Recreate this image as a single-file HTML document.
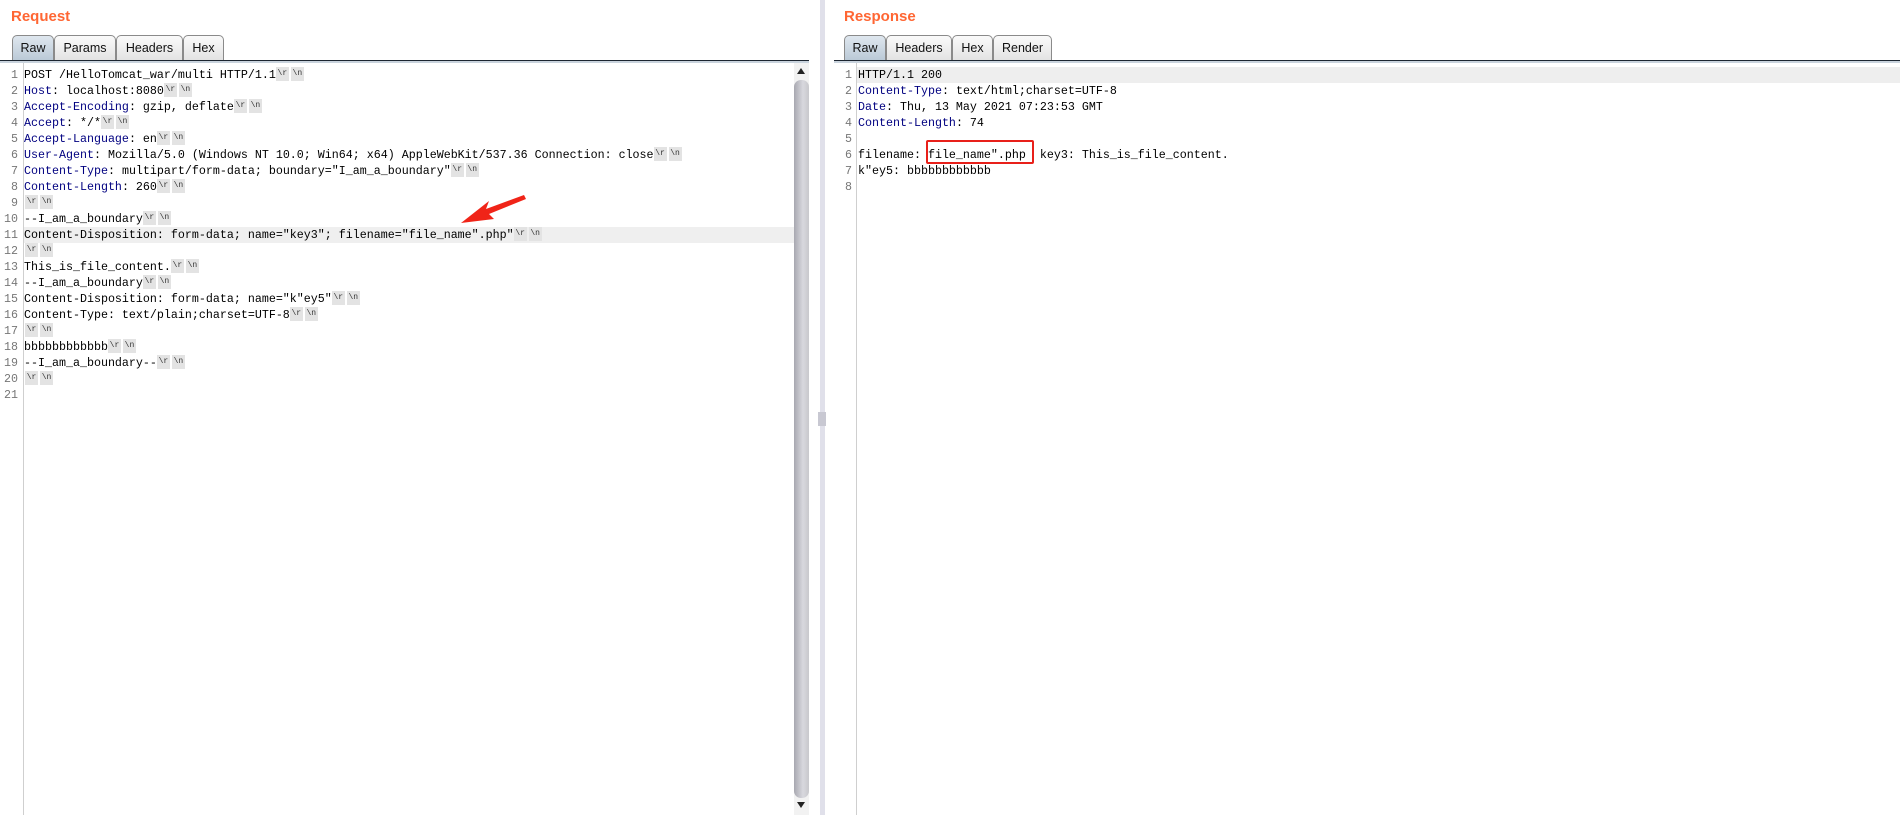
<!DOCTYPE html>
<html><head><meta charset="utf-8"><style>
*{margin:0;padding:0;box-sizing:border-box}
body{width:1900px;height:815px;background:#fff;position:relative;overflow:hidden;font-family:"Liberation Sans",Arial,sans-serif}
.title{position:absolute;top:8px;color:#ff6633;font-weight:bold;font-size:15px}
.tab{position:absolute;top:35px;height:26px;border:1px solid #8a8a8a;border-bottom:none;border-radius:5px 5px 0 0;background:linear-gradient(#fafafa,#e2e2e2);font-size:12.5px;color:#111;text-align:center;line-height:24px}
.tab.sel{background:linear-gradient(#dfe7ef,#b9c8d6)}
.bar{position:absolute;top:60px;height:3px;border-top:1px solid #1c2530;border-bottom:2px solid #c9d3dd}
.ed{position:absolute;top:67px;font-family:"Liberation Mono",monospace;font-size:11.667px;line-height:16px;color:#000}
.ln{height:16px;white-space:pre;position:relative}
.num{position:absolute;text-align:right;color:#777}
.k{color:#000080}
.t{display:inline-block;width:13px;height:14px;background:#e3e3e3;margin-right:2px;font-size:8px;line-height:14px;text-align:center;vertical-align:middle;position:relative;top:-1px;color:#333;letter-spacing:0}
.gut{position:absolute;top:63px;bottom:0;width:1px;background:#cfcfcf}
</style></head><body>
<div class="title" style="left:11px">Request</div>
<div class="title" style="left:844px">Response</div>

<div class="tab sel" style="left:12px;width:42px">Raw</div>
<div class="tab" style="left:54px;width:62px">Params</div>
<div class="tab" style="left:116px;width:67px">Headers</div>
<div class="tab" style="left:183px;width:41px">Hex</div>
<div class="bar" style="left:0;width:809px"></div>

<div class="tab sel" style="left:844px;width:42px">Raw</div>
<div class="tab" style="left:886px;width:66px">Headers</div>
<div class="tab" style="left:952px;width:41px">Hex</div>
<div class="tab" style="left:993px;width:59px">Render</div>
<div class="bar" style="left:834px;width:1066px"></div>

<div class="gut" style="left:23px"></div>
<div class="gut" style="left:856px"></div>

<div style="position:absolute;left:820px;top:0;width:5px;height:815px;background:#e0e0ea"></div>
<div style="position:absolute;left:818px;top:412px;width:8px;height:14px;background:#c8c8d2"></div>

<div style="position:absolute;left:794px;top:63px;width:15px;height:752px;background:#f2f2f2"></div>
<div style="position:absolute;left:797px;top:68px;width:0;height:0;border-left:4px solid transparent;border-right:4px solid transparent;border-bottom:6px solid #222"></div>
<div style="position:absolute;left:794px;top:80px;width:15px;height:718px;border-radius:7px;background:linear-gradient(90deg,#a8a8b0,#d8d8de 60%,#c8c8cc)"></div>
<div style="position:absolute;left:797px;top:802px;width:0;height:0;border-left:4px solid transparent;border-right:4px solid transparent;border-top:6px solid #222"></div>

<div style="position:absolute;left:24px;top:227px;width:770px;height:16px;background:#efefef"></div>
<div style="position:absolute;left:857px;top:67px;width:1043px;height:16px;background:#eeeeee"></div>

<div class="ed" style="left:0;width:794px">
<div class="ln"><span class="num" style="left:0;width:18px">1</span><span style="position:absolute;left:24px">POST /HelloTomcat_war/multi HTTP/1.1<span class="t">\r</span><span class="t">\n</span></span></div>
<div class="ln"><span class="num" style="left:0;width:18px">2</span><span style="position:absolute;left:24px"><span class="k">Host</span>: localhost:8080<span class="t">\r</span><span class="t">\n</span></span></div>
<div class="ln"><span class="num" style="left:0;width:18px">3</span><span style="position:absolute;left:24px"><span class="k">Accept-Encoding</span>: gzip, deflate<span class="t">\r</span><span class="t">\n</span></span></div>
<div class="ln"><span class="num" style="left:0;width:18px">4</span><span style="position:absolute;left:24px"><span class="k">Accept</span>: */*<span class="t">\r</span><span class="t">\n</span></span></div>
<div class="ln"><span class="num" style="left:0;width:18px">5</span><span style="position:absolute;left:24px"><span class="k">Accept-Language</span>: en<span class="t">\r</span><span class="t">\n</span></span></div>
<div class="ln"><span class="num" style="left:0;width:18px">6</span><span style="position:absolute;left:24px"><span class="k">User-Agent</span>: Mozilla/5.0 (Windows NT 10.0; Win64; x64) AppleWebKit/537.36 Connection: close<span class="t">\r</span><span class="t">\n</span></span></div>
<div class="ln"><span class="num" style="left:0;width:18px">7</span><span style="position:absolute;left:24px"><span class="k">Content-Type</span>: multipart/form-data; boundary="I_am_a_boundary"<span class="t">\r</span><span class="t">\n</span></span></div>
<div class="ln"><span class="num" style="left:0;width:18px">8</span><span style="position:absolute;left:24px"><span class="k">Content-Length</span>: 260<span class="t">\r</span><span class="t">\n</span></span></div>
<div class="ln"><span class="num" style="left:0;width:18px">9</span><span style="position:absolute;left:25px"><span class="t">\r</span><span class="t">\n</span></span></div>
<div class="ln"><span class="num" style="left:0;width:18px">10</span><span style="position:absolute;left:24px">--I_am_a_boundary<span class="t">\r</span><span class="t">\n</span></span></div>
<div class="ln"><span class="num" style="left:0;width:18px">11</span><span style="position:absolute;left:24px">Content-Disposition: form-data; name="key3"; filename="file_name".php"<span class="t">\r</span><span class="t">\n</span></span></div>
<div class="ln"><span class="num" style="left:0;width:18px">12</span><span style="position:absolute;left:25px"><span class="t">\r</span><span class="t">\n</span></span></div>
<div class="ln"><span class="num" style="left:0;width:18px">13</span><span style="position:absolute;left:24px">This_is_file_content.<span class="t">\r</span><span class="t">\n</span></span></div>
<div class="ln"><span class="num" style="left:0;width:18px">14</span><span style="position:absolute;left:24px">--I_am_a_boundary<span class="t">\r</span><span class="t">\n</span></span></div>
<div class="ln"><span class="num" style="left:0;width:18px">15</span><span style="position:absolute;left:24px">Content-Disposition: form-data; name="k"ey5"<span class="t">\r</span><span class="t">\n</span></span></div>
<div class="ln"><span class="num" style="left:0;width:18px">16</span><span style="position:absolute;left:24px">Content-Type: text/plain;charset=UTF-8<span class="t">\r</span><span class="t">\n</span></span></div>
<div class="ln"><span class="num" style="left:0;width:18px">17</span><span style="position:absolute;left:25px"><span class="t">\r</span><span class="t">\n</span></span></div>
<div class="ln"><span class="num" style="left:0;width:18px">18</span><span style="position:absolute;left:24px">bbbbbbbbbbbb<span class="t">\r</span><span class="t">\n</span></span></div>
<div class="ln"><span class="num" style="left:0;width:18px">19</span><span style="position:absolute;left:24px">--I_am_a_boundary--<span class="t">\r</span><span class="t">\n</span></span></div>
<div class="ln"><span class="num" style="left:0;width:18px">20</span><span style="position:absolute;left:25px"><span class="t">\r</span><span class="t">\n</span></span></div>
<div class="ln"><span class="num" style="left:0;width:18px">21</span></div>
</div>

<div class="ed" style="left:834px;width:1066px">
<div class="ln"><span class="num" style="left:0;width:18px">1</span><span style="position:absolute;left:24px">HTTP/1.1 200</span></div>
<div class="ln"><span class="num" style="left:0;width:18px">2</span><span style="position:absolute;left:24px"><span class="k">Content-Type</span>: text/html;charset=UTF-8</span></div>
<div class="ln"><span class="num" style="left:0;width:18px">3</span><span style="position:absolute;left:24px"><span class="k">Date</span>: Thu, 13 May 2021 07:23:53 GMT</span></div>
<div class="ln"><span class="num" style="left:0;width:18px">4</span><span style="position:absolute;left:24px"><span class="k">Content-Length</span>: 74</span></div>
<div class="ln"><span class="num" style="left:0;width:18px">5</span></div>
<div class="ln"><span class="num" style="left:0;width:18px">6</span><span style="position:absolute;left:24px">filename: file_name".php  key3: This_is_file_content.</span></div>
<div class="ln"><span class="num" style="left:0;width:18px">7</span><span style="position:absolute;left:24px">k"ey5: bbbbbbbbbbbb</span></div>
<div class="ln"><span class="num" style="left:0;width:18px">8</span></div>
</div>

<div style="position:absolute;left:926px;top:140px;width:108px;height:24px;border:2px solid #e8201a;border-radius:2px"></div>

<svg style="position:absolute;left:0;top:0" width="820" height="300">
<polygon points="524,195 486,209 489,201 461,223 494,219 489,214 526,199" fill="#f02418"/>
</svg>
</body></html>
